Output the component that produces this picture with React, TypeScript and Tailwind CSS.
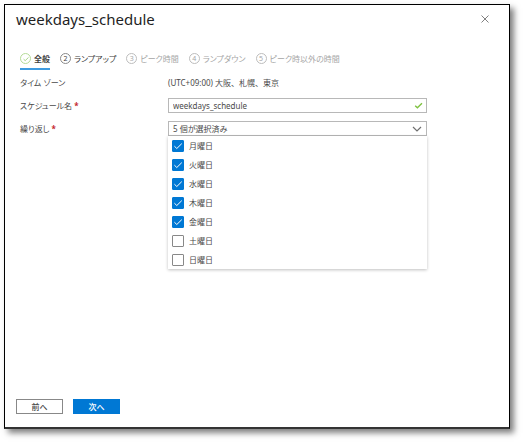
import { useState } from 'react';
import clsx from 'clsx';

const STEPS = ['全般', 'ランプアップ', 'ピーク時間', 'ランプダウン', 'ピーク時以外の時間'];
const DAYS = ['月曜日', '火曜日', '水曜日', '木曜日', '金曜日', '土曜日', '日曜日'];

interface IconProps {
  className?: string;
}

const CheckIcon = ({ className }: IconProps) => (
  <svg viewBox="0 0 12 12" fill="none" stroke="currentColor" aria-hidden="true" className={className}>
    <path d="M2.4 6.2 4.8 8.5 9.8 3.6" />
  </svg>
);

const CloseIcon = ({ className }: IconProps) => (
  <svg viewBox="0 0 8 8" fill="none" stroke="currentColor" aria-hidden="true" className={className}>
    <path d="M.5.5l7 7M7.5.5l-7 7" />
  </svg>
);

const ChevronIcon = ({ className }: IconProps) => (
  <svg viewBox="0 0 10 6" fill="none" stroke="currentColor" strokeWidth="1.2" aria-hidden="true" className={className}>
    <path d="M1 1l4 4 4-4" />
  </svg>
);

interface StepTabProps {
  index: number;
  label: string;
  active: number;
}

const StepTab = ({ index, label, active }: StepTabProps) => {
  const current = index === active;
  const reachable = index <= active + 1;

  return (
    <button
      type="button"
      role="tab"
      aria-selected={current}
      disabled={!reachable}
      className={clsx(
        'flex h-[17px] shrink-0 items-center gap-[3px] border-b-2 pb-1 whitespace-nowrap',
        current ? 'border-[#3f9be0] font-bold' : 'border-transparent',
        reachable ? 'text-[#404040]' : 'text-[#a6a6a6]'
      )}>
      <span
        className={clsx(
          'flex size-[11px] items-center justify-center rounded-full border text-[7px] leading-none',
          current ? 'border-[#b5dc98] text-[#7dbb4e]' : reachable ? 'border-[#8a8a8a]' : 'border-[#bdbdbd]'
        )}>
        {current ? <CheckIcon className="size-2" /> : index + 1}
      </span>
      {label}
    </button>
  );
};

const Required = () => <span className="font-bold text-[#c4262e]"> *</span>;

export default function App() {
  const [name, setName] = useState('weekdays_schedule');
  const [selected, setSelected] = useState(DAYS.slice(0, 5));
  const [open, setOpen] = useState(true);

  const toggleDay = (day: string) =>
    setSelected((days) => (days.includes(day) ? days.filter((d) => d !== day) : [...days, day]));

  return (
    <div
      lang="ja"
      className="flex min-h-screen bg-white pt-1 pr-[13px] pb-[13px] pl-1 font-['Noto_Sans','Noto_Sans_CJK_JP',sans-serif] text-[8px] leading-3 text-[#4a4a4a] [font-feature-settings:'palt']">
      <main className="flex min-w-0 flex-1 flex-col border border-b-2 border-black border-b-[#333333] bg-white shadow-[4px_4px_6px_rgba(0,0,0,0.5)]">
        <header className="flex items-start justify-between pt-1 pr-5 pl-[11px]">
          <h1 className="text-[15px] leading-5 text-[#1f1f1f]">weekdays_schedule</h1>
          <button type="button" aria-label="閉じる" className="mt-1.5 text-[#808080]">
            <CloseIcon className="size-2" />
          </button>
        </header>

        <div role="tablist" className="mt-6 flex gap-2.5 pl-[15px]">
          {STEPS.map((label, index) => (
            <StepTab key={label} index={index} label={label} active={0} />
          ))}
        </div>

        <form className="mt-[5px] grid auto-rows-[15px] grid-cols-[148px_1fr] items-center gap-y-2 pr-[82px] pl-[15px]">
          <span>タイム ゾーン</span>
          <span className="[font-feature-settings:normal]">(UTC+09:00) 大阪、札幌、東京</span>

          <label htmlFor="schedule-name">
            スケジュール名
            <Required />
          </label>
          <div className="flex h-[15px] items-center border border-[#b8b8b8] pr-0.5 pl-1">
            <input
              id="schedule-name"
              type="text"
              required
              value={name}
              onChange={(e) => setName(e.target.value)}
              className="h-3 min-w-0 flex-1 outline-none"
            />
            <CheckIcon className="size-[11px] shrink-0 stroke-[1.5] text-[#7fc241]" />
          </div>

          <label htmlFor="repeat-days">
            繰り返し
            <Required />
          </label>
          <div className="relative">
            <button
              id="repeat-days"
              type="button"
              aria-haspopup="true"
              aria-expanded={open}
              onClick={() => setOpen(!open)}
              className="flex h-[15px] w-full items-center justify-between border border-[#b8b8b8] pr-1 pl-1">
              {selected.length} 個が選択済み
              <ChevronIcon className="h-1.5 w-2.5 text-[#707070]" />
            </button>
            {open && (
              <div className="absolute inset-x-0 top-full bg-white shadow-[0_1px_3px_rgba(0,0,0,0.25)]">
                {DAYS.map((day) => (
                  <label key={day} className="flex h-[19px] items-center gap-[5px] pl-1">
                    <span className="grid size-3">
                      <input
                        type="checkbox"
                        checked={selected.includes(day)}
                        onChange={() => toggleDay(day)}
                        className="peer col-start-1 row-start-1 size-3 appearance-none rounded-[1px] border border-[#888888] bg-white checked:border-[#0078d4] checked:bg-[#0078d4]"
                      />
                      <CheckIcon className="pointer-events-none col-start-1 row-start-1 hidden size-3 text-white peer-checked:block" />
                    </span>
                    {day}
                  </label>
                ))}
              </div>
            )}
          </div>
        </form>

        <footer className="mt-auto flex gap-2.5 pb-[13px] pl-[11px]">
          <button type="button" className="h-[15px] w-[47px] border border-[#888888] font-medium">
            前へ
          </button>
          <button type="button" className="h-[15px] w-[47px] bg-[#0078d4] font-medium text-white">
            次へ
          </button>
        </footer>
      </main>
    </div>
  );
}
